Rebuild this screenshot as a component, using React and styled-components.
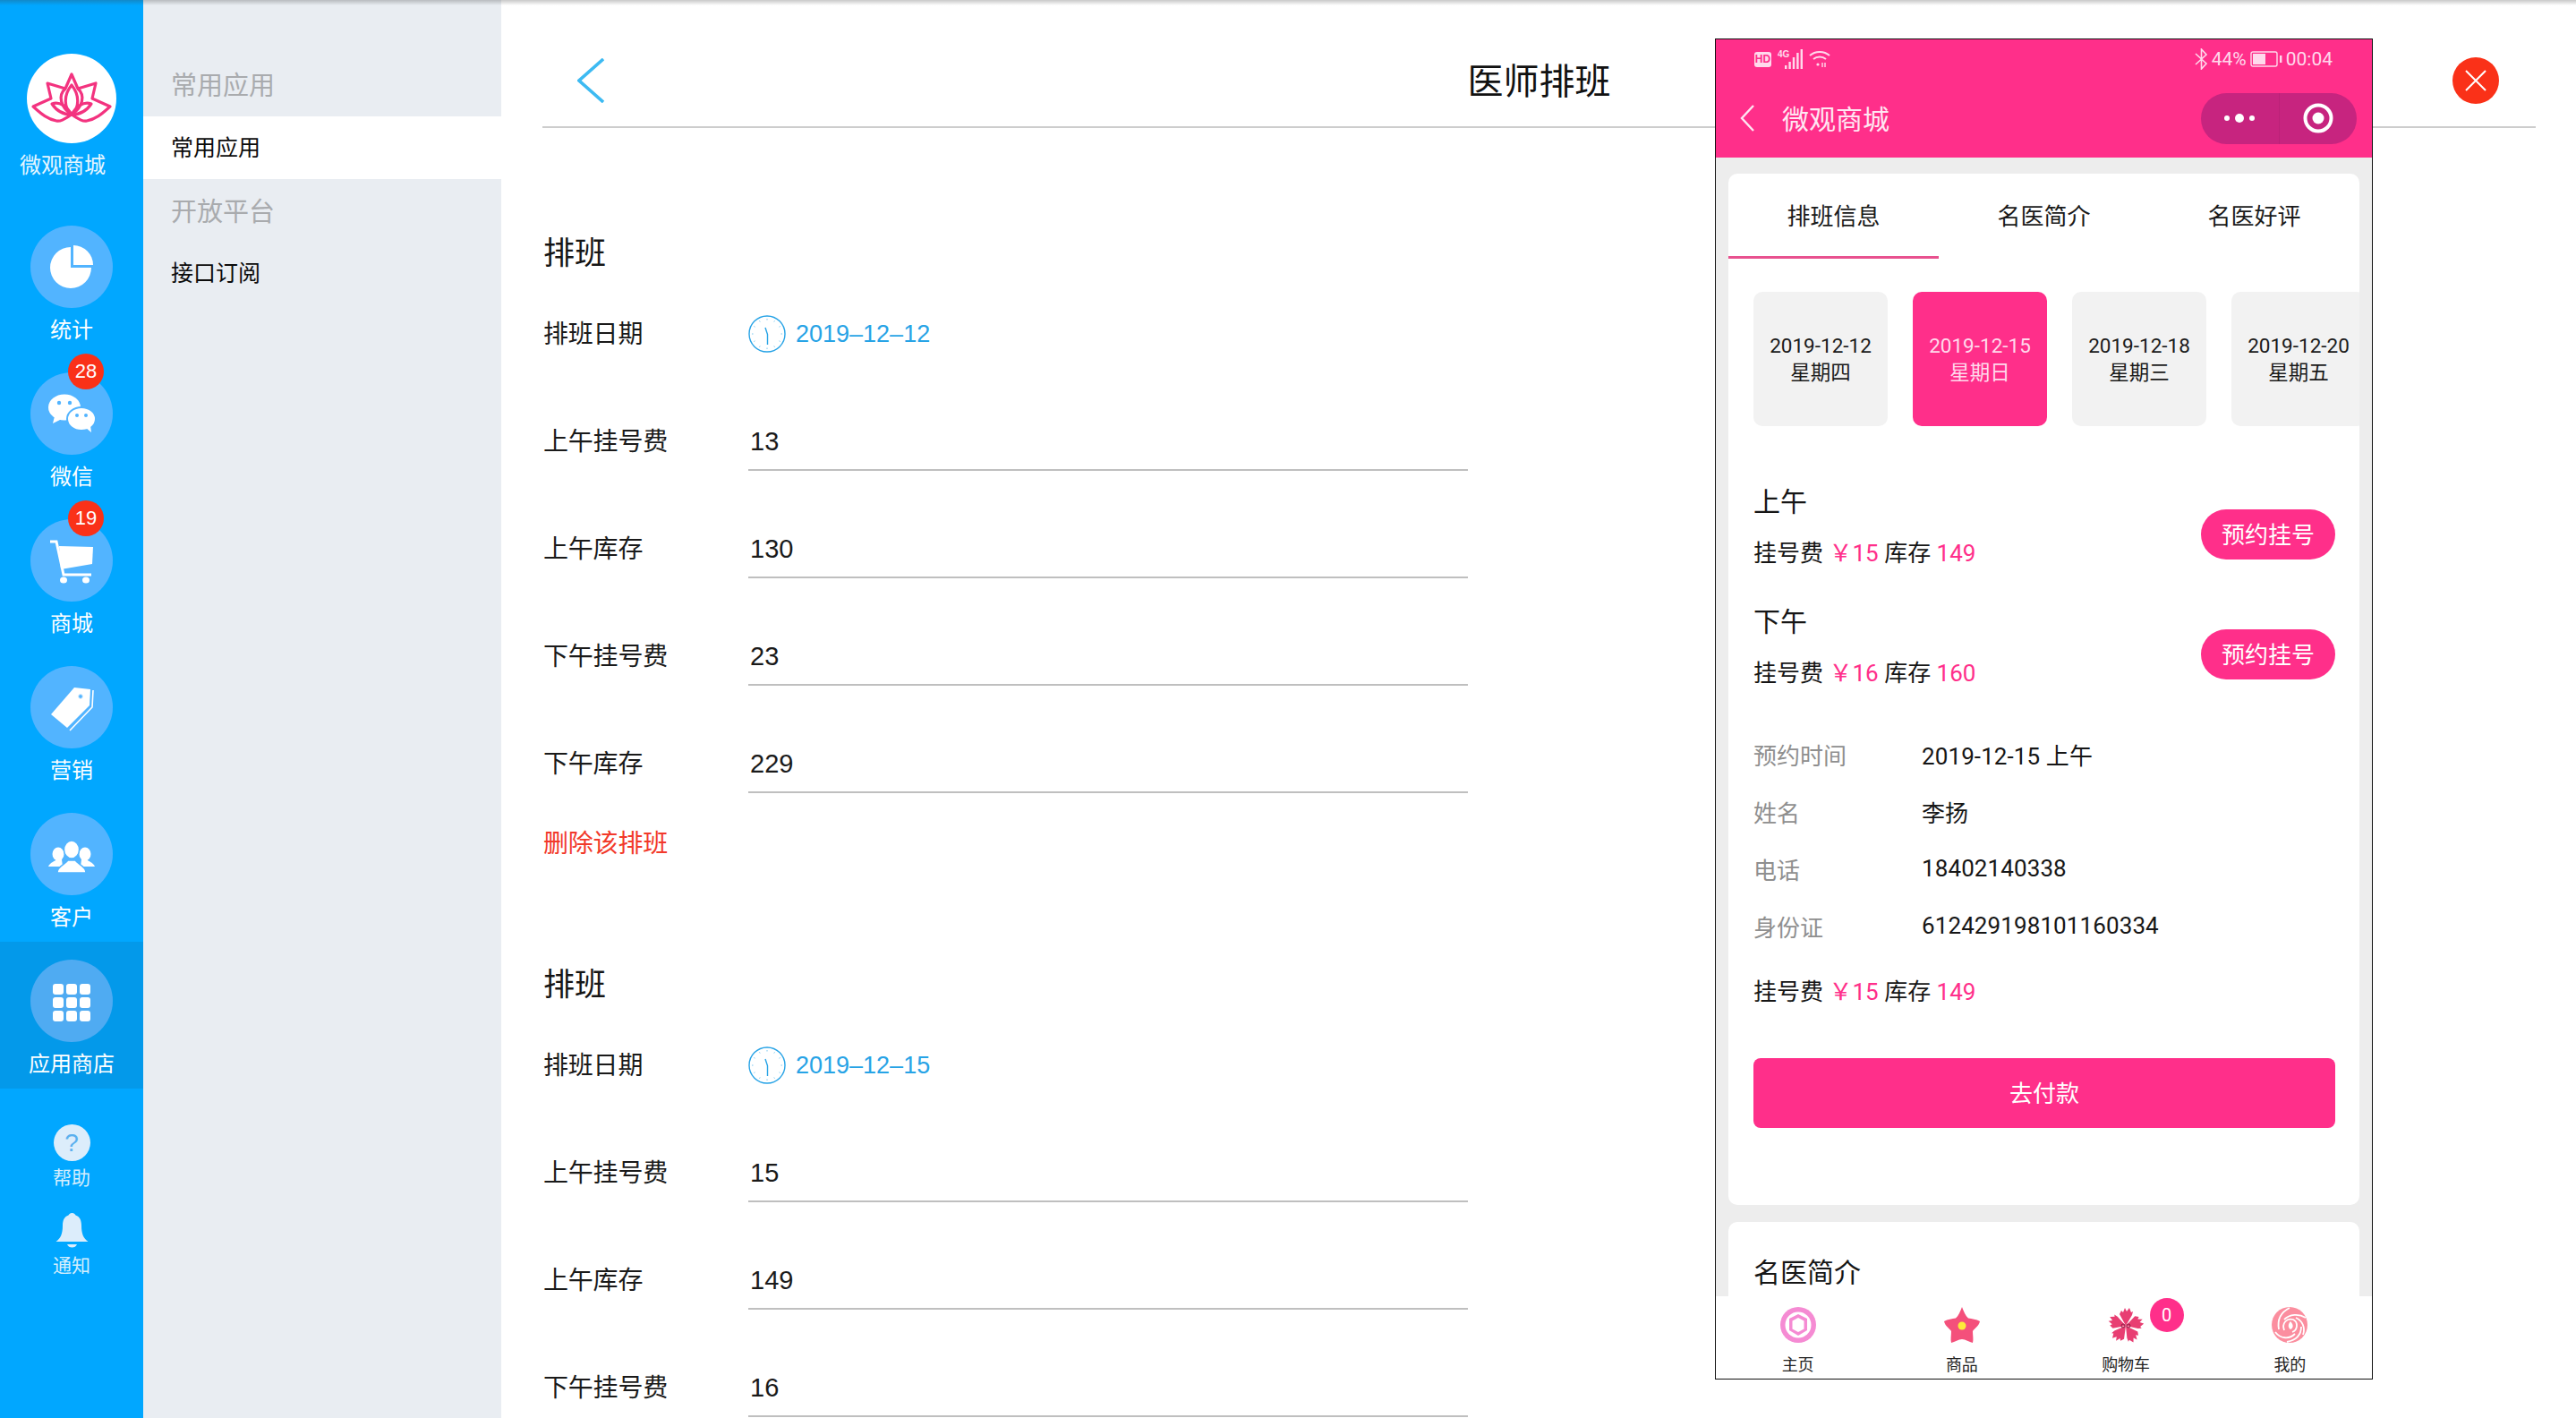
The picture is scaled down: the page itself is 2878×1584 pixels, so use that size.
import styled, { createGlobalStyle } from "styled-components";

const PINK = "#ff2f8a";
const CJK = '"Noto Sans CJK SC", sans-serif';
const LATIN = '"Liberation Sans", "Noto Sans CJK SC", sans-serif';
const PHONE = 'Roboto, "Noto Sans CJK SC", sans-serif';

const GlobalStyle = createGlobalStyle`
  html, body {
    margin: 0;
    padding: 0;
    height: 1584px;
    overflow: hidden;
    background: #fff;
    font-family: ${CJK};
  }
`;

const Page = styled.div`
  position: relative;
  display: flex;
  width: 2878px;
  height: 1584px;
  overflow: hidden;
`;
const TopShade = styled.div`
  position: absolute;
  top: 0;
  left: 0;
  right: 0;
  height: 6px;
  background: linear-gradient(rgba(60, 60, 60, 0.28), rgba(60, 60, 60, 0));
`;

/* sidebar */
const Sidebar = styled.nav`
  width: 160px;
  flex-shrink: 0;
  display: flex;
  flex-direction: column;
  align-items: stretch;
  background: #01a7ff;
  color: #fff;
`;
const Brand = styled.div`
  display: flex;
  flex-direction: column;
  align-items: center;
  padding-top: 60px;
  height: 172px;
`;
const BrandLogo = styled.div`
  width: 100px;
  height: 100px;
  border-radius: 50%;
  background: #fff;
  svg { display: block; }
`;
const BrandName = styled.div`
  margin: 8px 20px 0 0;
  font-size: 24px;
  line-height: 30px;
  color: #e6f6ff;
`;
const NavItem = styled.div`
  position: relative;
  height: 164px;
  box-sizing: border-box;
  padding-top: 20px;
  display: flex;
  flex-direction: column;
  align-items: center;
  background: ${(p) => (p.$active ? "#0399ea" : "transparent")};
`;
const NavCircle = styled.div`
  width: 92px;
  height: 92px;
  border-radius: 50%;
  background: ${(p) => (p.$active ? "#4fabf2" : "#52b4ff")};
  svg { display: block; }
`;
const NavLabel = styled.div`
  margin-top: 8px;
  font-size: 24px;
  line-height: 30px;
  color: #fff;
`;
const NavBadge = styled.div`
  position: absolute;
  top: -1px;
  left: 76px;
  width: 40px;
  height: 40px;
  border-radius: 50%;
  background: #fa3118;
  color: #fff;
  font: 22px/40px ${LATIN};
  text-align: center;
`;
const MiniGroup = styled.div`
  margin-top: 40px;
  display: flex;
  flex-direction: column;
  align-items: center;
  gap: 27px;
`;
const MiniItem = styled.div`
  display: flex;
  flex-direction: column;
  align-items: center;
`;
const MiniIcon = styled.div`
  width: 41px;
  height: 41px;
  border-radius: 50%;
  background: ${(p) => (p.$round ? "#dcedfb" : "transparent")};
  color: #5bb0ee;
  font: 300 28px/41px ${LATIN};
  text-align: center;
  svg { display: block; }
`;
const MiniLabel = styled.div`
  margin-top: 4px;
  font-size: 21px;
  line-height: 26px;
  color: #d6eefd;
`;

/* secondary menu */
const SubMenu = styled.aside`
  width: 400px;
  flex-shrink: 0;
  background: #e9edf2;
`;
const MenuHeading = styled.div`
  height: ${(p) => p.$h}px;
  padding: ${(p) => p.$top}px 0 0 31px;
  box-sizing: border-box;
  font-size: 29px;
  line-height: 40px;
  color: #a9abae;
`;
const MenuRow = styled.div`
  height: 70px;
  padding-left: 31px;
  font-size: 25px;
  line-height: 67px;
  color: #0c0c0c;
  background: ${(p) => (p.$active ? "#fff" : "transparent")};
`;

/* main form */
const Main = styled.main`
  flex: 1;
  padding: 0 45px 0 46px;
  min-width: 0;
`;
const Header = styled.header`
  display: grid;
  grid-template-columns: 1fr auto 1fr;
  align-items: center;
  border-bottom: 2px solid #cdcdcd;
  padding-top: 38px;
  height: 103px;
`;
const BackLink = styled.div`
  padding-left: 39px;
  svg { display: block; }
`;
const Title = styled.h1`
  margin: -3px 0 0;
  font-size: 40px;
  line-height: 50px;
  font-weight: 400;
  color: #111;
`;
const CloseSlot = styled.div`
  display: flex;
  justify-content: flex-end;
  padding-right: 41px;
`;
const CloseButton = styled.div`
  width: 52px;
  height: 52px;
  border-radius: 50%;
  background: #fa3118;
  display: flex;
  align-items: center;
  justify-content: center;
`;
const Section = styled.section`
  width: 1034px;
  padding-top: 112px;
`;
const SectionTitle = styled.h2`
  margin: 0 0 34px 1px;
  font-size: 35px;
  line-height: 50px;
  font-weight: 400;
  color: #161616;
`;
const FormRow = styled.div`
  display: flex;
  align-items: center;
  height: 67px;
  margin-top: ${(p) => (p.$first ? 0 : 53)}px;
`;
const FormLabel = styled.div`
  width: 230px;
  padding: 0 0 4px 1px;
  box-sizing: border-box;
  flex-shrink: 0;
  font-size: 28px;
  letter-spacing: -0.2px;
  color: #1a1a1a;
`;
const FormValue = styled.div`
  flex: 1;
  height: 67px;
  box-sizing: border-box;
  padding-left: 2px;
  border-bottom: 2px solid #bfbfbf;
  font: 29px/68px ${LATIN};
  color: #1a1a1a;
`;
const DateValue = styled.div`
  display: flex;
  align-items: center;
  gap: 11px;
  font: 27px/42px ${LATIN};
  color: #27a3e6;
  svg { display: block; }
`;
const DeleteLink = styled.div`
  margin: 34px 0 0 1px;
  font-size: 28px;
  letter-spacing: -0.2px;
  line-height: 40px;
  color: #f2392a;
`;

/* phone overlay */
const Phone = styled.div`
  position: absolute;
  top: 43px;
  left: 1916px;
  width: 735px;
  height: 1498px;
  box-sizing: border-box;
  border: 1px solid #111;
  display: flex;
  flex-direction: column;
  overflow: hidden;
  background: #ededed;
  font-family: ${PHONE};
`;
const PhoneTop = styled.div`
  height: 132px;
  flex-shrink: 0;
  background: ${PINK};
  color: #fff;
`;
const StatusBar = styled.div`
  height: 44px;
  display: flex;
  align-items: center;
  justify-content: space-between;
  padding: 0 44px 0 43px;
`;
const StatusGroup = styled.div`
  display: flex;
  align-items: center;
  gap: ${(p) => p.$gap}px;
  font-size: 21px;
  color: #ffd9ec;
  svg { display: block; }
`;
const HdTag = styled.span`
  width: 19px;
  height: 17px;
  border-radius: 3px;
  background: #ffd9ec;
  color: ${PINK};
  font: 700 12px/17px ${LATIN};
  text-align: center;
`;
const FourG = styled.span`
  font: 700 10px/10px ${LATIN};
  margin: -10px -12px 0 0;
  color: #ffd9ec;
`;
const NavBar = styled.div`
  height: 88px;
  display: flex;
  align-items: center;
  padding: 0 17px 0 27px;
  svg { display: block; }
`;
const NavTitle = styled.div`
  flex: 1;
  margin: -2px 0 0 31px;
  font: 30px/40px ${CJK};
  color: #ffe6f2;
`;
const Capsule = styled.div`
  width: 174px;
  height: 57px;
  border-radius: 29px;
  background: #c7247f;
  display: flex;
  align-items: center;
`;
const CapsulePart = styled.div`
  width: 88px;
  height: 100%;
  display: flex;
  align-items: center;
  justify-content: center;
  border-right: ${(p) => (p.$line ? "1px solid #bb2279" : "none")};
`;
const Scroller = styled.div`
  flex: 1;
  min-height: 0;
  overflow: hidden;
  padding: 18px 14px 0;
`;
const Card = styled.div`
  background: #fff;
  border-radius: 10px;
  overflow: hidden;
  margin-bottom: 19px;
`;
const Tabs = styled.div`
  display: flex;
`;
const Tab = styled.div`
  flex: 1;
  height: 95px;
  box-sizing: border-box;
  line-height: 92px;
  text-align: center;
  font-family: ${CJK};
  font-size: 26px;
  color: #1a1a1a;
  border-bottom: 3px solid ${(p) => (p.$active ? "#e8518f" : "transparent")};
`;
const DateStrip = styled.div`
  display: flex;
  gap: 28px;
  margin-top: 37px;
  padding-left: 28px;
  overflow: hidden;
`;
const DateCard = styled.div`
  width: 150px;
  height: 150px;
  flex-shrink: 0;
  border-radius: 10px;
  display: flex;
  flex-direction: column;
  align-items: center;
  justify-content: center;
  font-size: 22.5px;
  line-height: 30px;
  white-space: nowrap;
  background: ${(p) => (p.$active ? PINK : "#f2f2f2")};
  color: ${(p) => (p.$active ? "#ffd9ec" : "#1a1a1a")};
`;
const Sessions = styled.div`
  margin-top: 62px;
  padding: 0 27px 0 28px;
  display: flex;
  flex-direction: column;
  gap: 34px;
`;
const Session = styled.div`
  display: flex;
  justify-content: space-between;
  align-items: center;
`;
const SessionName = styled.div`
  font: 30px/40px ${CJK};
  color: #161616;
  margin-bottom: 20px;
`;
const FeeLine = styled.div`
  font-size: 26px;
  line-height: 40px;
  color: #161616;
  white-space: pre;
  em {
    font-style: normal;
    color: ${PINK};
  }
`;
const BookButton = styled.div`
  width: 150px;
  height: 56px;
  margin-top: 18px;
  border-radius: 28px;
  background: ${PINK};
  color: #fff;
  text-align: center;
  font: 26px/54px ${CJK};
`;
const Details = styled.div`
  margin-top: 38px;
  padding: 0 27px 0 28px;
`;
const DetailRow = styled.div`
  display: flex;
  height: 64px;
  align-items: center;
  font-size: 26px;
`;
const DetailKey = styled.div`
  width: 188px;
  color: #8f8f8f;
  font-family: ${CJK};
`;
const DetailValue = styled.div`
  color: #161616;
  letter-spacing: 0.1px;
`;
const FeeSummary = styled.div`
  margin: 22px 27px 0 28px;
`;
const PayButton = styled.div`
  margin: 54px 27px 86px 28px;
  height: 78px;
  border-radius: 8px;
  background: ${PINK};
  color: #fff;
  text-align: center;
  font: 26px/76px ${CJK};
`;
const CardTitle = styled.div`
  padding: 34px 28px 40px;
  font: 30px/40px ${CJK};
  color: #161616;
`;
const TabBar = styled.div`
  height: 92px;
  flex-shrink: 0;
  display: flex;
  background: #fff;
`;
const TabItem = styled.div`
  position: relative;
  flex: 1;
  display: flex;
  flex-direction: column;
  align-items: center;
  padding-top: 12px;
  svg { display: block; }
`;
const TabLabel = styled.div`
  margin-top: 11px;
  font: 18px/24px ${CJK};
  color: #222;
`;
const CartBadge = styled.div`
  position: absolute;
  top: 2px;
  left: 118px;
  width: 38px;
  height: 38px;
  border-radius: 50%;
  background: ${PINK};
  color: #fff;
  text-align: center;
  font: 20px/38px ${PHONE};
`;

/* drawings */
const Lotus = () => (
  <svg width="100" height="100" viewBox="0 0 100 100" fill="none" stroke="#f3337f" strokeWidth="3.2" strokeLinejoin="round">
    <path d="M50 68C42 73 38 76 33 75C22 73 15 66 7 59L27 50L23 33L43 39L50 23L57 39L77 33L73 50L93 59C85 66 78 73 67 75C62 76 58 73 50 68Z" />
    <path d="M50 68C41 60 41 46 50 35C59 46 59 60 50 68Z" />
    <path d="M50 68C38 60 34 47 43 39M50 68C62 60 66 47 57 39" />
    <path d="M50 68C42 68 34 65 28 56C37 53 45 59 50 68ZM50 68C58 68 66 65 72 56C63 53 55 59 50 68Z" />
  </svg>
);
const PieIcon = () => (
  <svg width="92" height="92" viewBox="0 0 92 92" fill="#fff">
    <path d="M45 24V47H68A23 23 0 1 1 45 24Z" />
    <path d="M48 22V44H70A22 22 0 0 0 48 22Z" />
  </svg>
);
const ChatIcon = () => (
  <svg width="92" height="92" viewBox="0 0 92 92" fill="#fff">
    <ellipse cx="38" cy="39" rx="18" ry="14.5" />
    <path d="M27 49L25 57L35 52Z" />
    <circle cx="32" cy="34" r="2.2" fill="#52b4ff" />
    <circle cx="44" cy="34" r="2.2" fill="#52b4ff" />
    <ellipse cx="57" cy="52" rx="16" ry="13" stroke="#52b4ff" strokeWidth="2" />
    <path d="M62 62L68 67L67 59Z" />
    <circle cx="52" cy="48" r="2" fill="#52b4ff" />
    <circle cx="62" cy="48" r="2" fill="#52b4ff" />
  </svg>
);
const CartIcon = () => (
  <svg width="92" height="92" viewBox="0 0 92 92" fill="#fff">
    <path d="M32 30L70 31L69 50L34 56Z" />
    <path d="M22 25H29L37 62H68" fill="none" stroke="#fff" strokeWidth="3" />
    <ellipse cx="37" cy="68" rx="4" ry="3.5" />
    <ellipse cx="62" cy="68" rx="4" ry="3.5" />
  </svg>
);
const TagIcon = () => (
  <svg width="92" height="92" viewBox="0 0 92 92" fill="#fff">
    <path d="M23 54L49 24L67 26L66 44L41 69Z" />
    <path d="M70 27L69 46L44 72" fill="none" stroke="#fff" strokeWidth="1.6" />
    <circle cx="56" cy="34" r="2.4" fill="#52b4ff" stroke="#d3ebff" strokeWidth="1" />
  </svg>
);
const PeopleIcon = () => (
  <svg width="92" height="92" viewBox="0 0 92 92" fill="#fff">
    <ellipse cx="31" cy="46" rx="6.5" ry="7.5" />
    <path d="M20 60C22 55 28 54 29 52H35L36 60Z" />
    <ellipse cx="61" cy="46" rx="6.5" ry="7.5" />
    <path d="M72 60C70 55 64 54 63 52H57L56 60Z" />
    <ellipse cx="46" cy="41" rx="8.5" ry="10" stroke="#52b4ff" strokeWidth="1.4" />
    <path d="M30 67C30 59 39 58 42 53H50C53 58 62 59 62 67Z" stroke="#52b4ff" strokeWidth="1.4" />
  </svg>
);
const GridIcon = () => (
  <svg width="92" height="92" viewBox="0 0 92 92" fill="#fff">
    {[25, 40, 55].map((x) =>
      [27, 42, 57].map((y) => <rect key={`${x}-${y}`} x={x} y={y} width="12" height="12" rx="3" />)
    )}
  </svg>
);
const BellIcon = () => (
  <svg width="41" height="41" viewBox="0 0 41 41" fill="#dcedfb">
    <path d="M20.5 1C23 1 24 2.5 24.5 3.5C29 5 31 9 31 15C31 24 33 29 38.5 33H2.5C8 29 10 24 10 15C10 9 12 5 16.5 3.5C17 2.5 18 1 20.5 1Z" />
    <path d="M15 36H26C25 38.5 23 39.5 20.5 39.5C18 39.5 16 38.5 15 36Z" />
  </svg>
);
const Chevron = ({ w, h, color, sw }) => (
  <svg width={w} height={h} viewBox={`0 0 ${w} ${h}`} fill="none" stroke={color} strokeWidth={sw}>
    <path d={`M${w - 1} 1L2 ${h / 2}L${w - 1} ${h - 1}`} />
  </svg>
);
const CloseX = () => (
  <svg width="26" height="26" viewBox="0 0 26 26" stroke="#fff" strokeWidth="2">
    <path d="M2 2L24 24M24 2L2 24" />
  </svg>
);
const ClockIcon = () => (
  <svg width="42" height="42" viewBox="0 0 42 42" fill="none" stroke="#27a3e6">
    <circle cx="21" cy="21" r="20" strokeWidth="1.4" />
    <path d="M19 14L21.5 21.5V33" strokeWidth="1.4" />
    <path d="M21 4V5.5M21 36.5V38M4 21H5.5M36.5 21H38M12.5 6.3L13.2 7.5M29.5 6.3L28.8 7.5M12.5 35.7L13.2 34.5M29.5 35.7L28.8 34.5M6.3 12.5L7.5 13.2M6.3 29.5L7.5 28.8M35.7 12.5L34.5 13.2M35.7 29.5L34.5 28.8" strokeWidth="1" opacity="0.6" />
  </svg>
);
const SignalIcon = () => (
  <svg width="20" height="22" viewBox="0 0 20 22" fill="#ffd9ec">
    <rect x="0" y="18" width="2.4" height="4" />
    <rect x="4.4" y="14" width="2.4" height="8" />
    <rect x="8.8" y="9" width="2.4" height="13" />
    <rect x="13.2" y="4" width="2.4" height="18" />
    <rect x="17.6" y="0" width="2.4" height="22" />
  </svg>
);
const WifiIcon = () => (
  <svg width="24" height="20" viewBox="0 0 24 20" fill="none" stroke="#ffd9ec" strokeWidth="2">
    <path d="M1 6C7 0.5 17 0.5 23 6M5 10C9 6.5 15 6.5 19 10" />
    <circle cx="10" cy="16" r="1.6" fill="#ffd9ec" stroke="none" />
    <path d="M15 14V19M18 14V19" strokeWidth="1.4" />
  </svg>
);
const BluetoothIcon = () => (
  <svg width="15" height="24" viewBox="0 0 15 24" fill="none" stroke="#ffd9ec" strokeWidth="1.6">
    <path d="M1 6L13 17L7.5 23V1L13 7L1 18" />
  </svg>
);
const BatteryIcon = () => (
  <svg width="36" height="18" viewBox="0 0 36 18" fill="none">
    <rect x="1" y="1" width="29" height="16" rx="2" stroke="#ffd9ec" strokeWidth="1.4" />
    <rect x="3" y="3" width="14" height="12" fill="#ffd9ec" />
    <rect x="33" y="5" width="2.4" height="8" fill="#ffd9ec" />
  </svg>
);
const DotsIcon = () => (
  <svg width="36" height="16" viewBox="0 0 36 16" fill="#fff">
    <circle cx="4" cy="8" r="3" />
    <circle cx="18" cy="8" r="5" />
    <circle cx="32" cy="8" r="3" />
  </svg>
);
const RingIcon = () => (
  <svg width="34" height="34" viewBox="0 0 34 34">
    <circle cx="17" cy="17" r="14.5" fill="none" stroke="#fff" strokeWidth="4" />
    <circle cx="17" cy="17" r="6.5" fill="#fff" />
  </svg>
);
const HomeFlower = () => (
  <svg width="40" height="40" viewBox="0 0 40 40">
    <circle cx="20" cy="20" r="20" fill="#f58bd3" />
    <circle cx="20" cy="20" r="14.5" fill="#fff" />
    <path d="M20 8L30 13V26L20 32L10 26V13Z" fill="#f58bd3" />
    <path d="M20 12L26.5 15.5V24.5L20 28L13.5 24.5V15.5Z" fill="#fff" />
  </svg>
);
const StarFlower = () => (
  <svg width="40" height="40" viewBox="0 0 40 40">
    <path d="M20 0C22 5 24 10 27 12.5C31 13.5 36 13.5 40 16C39 21 34 24 32 27C32 32 33 36 32 40C28 39 24 36 20 36C16 36 12 39 8 40C7 36 8 32 8 27C6 24 1 21 0 16C4 13.5 9 13.5 13 12.5C16 10 18 5 20 0Z" fill="#f4507b" />
    <ellipse cx="20" cy="21" rx="4.5" ry="4.5" fill="#fde93a" />
  </svg>
);
const Carnation = () => (
  <svg width="40" height="40" viewBox="0 0 40 40" fill="#e83e72">
    {[0, 72, 144, 216, 288].map((a) => (
      <path key={a} transform={`rotate(${a} 20 21)`} d="M20 21L13 8L15 4L17 6L19 1L21 5L24 1L26 6L28 5L27 9Z" />
    ))}
    <g fill="none" stroke="#8f1f45" strokeWidth="1">
      <circle cx="17" cy="21" r="2" />
      <circle cx="23" cy="21" r="2" />
    </g>
  </svg>
);
const Rose = () => (
  <svg width="40" height="40" viewBox="0 0 40 40">
    <circle cx="20" cy="20" r="20" fill="#fb8e9f" />
    <g fill="none" stroke="#fff" strokeWidth="1.8">
      <path d="M20 1C10 6 6 14 8 25" />
      <path d="M38 12C30 7 20 8 14 14" />
      <path d="M35 31C38 23 34 15 27 12" />
      <path d="M17 39C27 37 33 31 33 22" />
      <path d="M4 28C10 36 20 36 26 30" />
      <path d="M14 26C11 18 17 12 24 14C30 17 29 26 23 28" />
    </g>
    <path d="M21 16C24 19 25 23 21 25C18 23 18 19 21 16Z" fill="#fff" />
  </svg>
);

const navItems = [
  { label: "统计", icon: <PieIcon /> },
  { label: "微信", icon: <ChatIcon />, badge: 28 },
  { label: "商城", icon: <CartIcon />, badge: 19 },
  { label: "营销", icon: <TagIcon /> },
  { label: "客户", icon: <PeopleIcon /> },
  { label: "应用商店", icon: <GridIcon />, active: true },
];

const schedules = [
  { date: "2019–12–12", rows: [["上午挂号费", "13"], ["上午库存", "130"], ["下午挂号费", "23"], ["下午库存", "229"]], canDelete: true },
  { date: "2019–12–15", rows: [["上午挂号费", "15"], ["上午库存", "149"], ["下午挂号费", "16"], ["下午库存", "160"]] },
];

const dates = [
  ["2019-12-12", "星期四"],
  ["2019-12-15", "星期日", true],
  ["2019-12-18", "星期三"],
  ["2019-12-20", "星期五"],
];

const details = [
  ["预约时间", "2019-12-15 上午"],
  ["姓名", "李扬"],
  ["电话", "18402140338"],
  ["身份证", "612429198101160334"],
];

const Fee = ({ price, stock }) => (
  <FeeLine>
    挂号费 <em>￥{price}</em> 库存 <em>{stock}</em>
  </FeeLine>
);

export default function App() {
  return (
    <Page>
      <GlobalStyle />
      <Sidebar>
        <Brand>
          <BrandLogo><Lotus /></BrandLogo>
          <BrandName>微观商城</BrandName>
        </Brand>
        {navItems.map((item) => (
          <NavItem key={item.label} $active={item.active}>
            <NavCircle $active={item.active}>{item.icon}</NavCircle>
            <NavLabel>{item.label}</NavLabel>
            {item.badge && <NavBadge>{item.badge}</NavBadge>}
          </NavItem>
        ))}
        <MiniGroup>
          <MiniItem>
            <MiniIcon $round>?</MiniIcon>
            <MiniLabel>帮助</MiniLabel>
          </MiniItem>
          <MiniItem>
            <MiniIcon><BellIcon /></MiniIcon>
            <MiniLabel>通知</MiniLabel>
          </MiniItem>
        </MiniGroup>
      </Sidebar>

      <SubMenu>
        <MenuHeading $h={130} $top={73}>常用应用</MenuHeading>
        <MenuRow $active>常用应用</MenuRow>
        <MenuHeading $h={70} $top={14}>开放平台</MenuHeading>
        <MenuRow>接口订阅</MenuRow>
      </SubMenu>

      <Main>
        <Header>
          <BackLink><Chevron w={30} h={50} color="#3dbaf2" sw={3.6} /></BackLink>
          <Title>医师排班</Title>
          <CloseSlot>
            <CloseButton><CloseX /></CloseButton>
          </CloseSlot>
        </Header>
        {schedules.map((s) => (
          <Section key={s.date}>
            <SectionTitle>排班</SectionTitle>
            <FormRow $first>
              <FormLabel>排班日期</FormLabel>
              <DateValue><ClockIcon />{s.date}</DateValue>
            </FormRow>
            {s.rows.map(([label, value]) => (
              <FormRow key={label}>
                <FormLabel>{label}</FormLabel>
                <FormValue>{value}</FormValue>
              </FormRow>
            ))}
            {s.canDelete && <DeleteLink>删除该排班</DeleteLink>}
          </Section>
        ))}
      </Main>

      <Phone>
        <PhoneTop>
          <StatusBar>
            <StatusGroup $gap={7}>
              <HdTag>HD</HdTag>
              <FourG>4G</FourG>
              <SignalIcon />
              <WifiIcon />
            </StatusGroup>
            <StatusGroup $gap={4}>
              <BluetoothIcon />
              <span>44%</span>
              <BatteryIcon />
              <span>00:04</span>
            </StatusGroup>
          </StatusBar>
          <NavBar>
            <Chevron w={16} h={30} color="#ffe6f2" sw={2.4} />
            <NavTitle>微观商城</NavTitle>
            <Capsule>
              <CapsulePart $line><DotsIcon /></CapsulePart>
              <CapsulePart><RingIcon /></CapsulePart>
            </Capsule>
          </NavBar>
        </PhoneTop>

        <Scroller>
          <Card>
            <Tabs>
              <Tab $active>排班信息</Tab>
              <Tab>名医简介</Tab>
              <Tab>名医好评</Tab>
            </Tabs>
            <DateStrip>
              {dates.map(([day, week, active]) => (
                <DateCard key={day} $active={active}>
                  <span>{day}</span>
                  <span>{week}</span>
                </DateCard>
              ))}
            </DateStrip>
            <Sessions>
              <Session>
                <div>
                  <SessionName>上午</SessionName>
                  <Fee price={15} stock={149} />
                </div>
                <BookButton>预约挂号</BookButton>
              </Session>
              <Session>
                <div>
                  <SessionName>下午</SessionName>
                  <Fee price={16} stock={160} />
                </div>
                <BookButton>预约挂号</BookButton>
              </Session>
            </Sessions>
            <Details>
              {details.map(([key, value]) => (
                <DetailRow key={key}>
                  <DetailKey>{key}</DetailKey>
                  <DetailValue>{value}</DetailValue>
                </DetailRow>
              ))}
            </Details>
            <FeeSummary><Fee price={15} stock={149} /></FeeSummary>
            <PayButton>去付款</PayButton>
          </Card>
          <Card>
            <CardTitle>名医简介</CardTitle>
          </Card>
        </Scroller>

        <TabBar>
          <TabItem><HomeFlower /><TabLabel>主页</TabLabel></TabItem>
          <TabItem><StarFlower /><TabLabel>商品</TabLabel></TabItem>
          <TabItem>
            <Carnation />
            <TabLabel>购物车</TabLabel>
            <CartBadge>0</CartBadge>
          </TabItem>
          <TabItem><Rose /><TabLabel>我的</TabLabel></TabItem>
        </TabBar>
      </Phone>
      <TopShade />
    </Page>
  );
}
